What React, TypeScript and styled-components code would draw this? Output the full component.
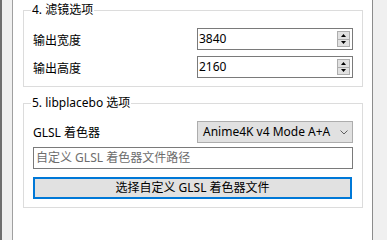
import styled, { createGlobalStyle } from 'styled-components';

const GlobalStyle = createGlobalStyle`
  html, body, #root {
    margin: 0;
    padding: 0;
    height: 100%;
    overflow: hidden;
    background: #f0f0f0;
  }
  body {
    font-family: "Noto Sans", "Noto Sans CJK SC", sans-serif;
    font-size: 12px;
    color: #000;
  }
`;

const Window = styled.div`
  display: flex;
  width: 100vw;
  height: 100vh;
  overflow: hidden;
  background: #f0f0f0;
`;

const EdgeStrip = styled.div`
  width: 2px;
  background: #6f6f6f;
  flex-shrink: 0;
`;

const Gutter = styled.div<{ $w: number }>`
  width: ${(p) => p.$w}px;
  flex-shrink: 0;
  background: #f0f0f0;
`;

const Panel = styled.div`
  width: 361px;
  box-sizing: border-box;
  flex-shrink: 0;
  background: #fff;
  border-left: 1px solid #a0a0a0;
  border-right: 1px solid #8c8c8c;
  padding: 2px 9px 0 10px;
  display: flex;
  flex-direction: column;
  gap: 8px;
`;

const Group = styled.fieldset`
  margin: 0;
  padding: 10px 9px 8px 9px;
  border: 1px solid #dcdcdc;
  min-inline-size: 0;
  display: flex;
  flex-direction: column;
`;

const Legend = styled.legend`
  padding: 0 1px;
  margin-left: -2px;
  line-height: 16px;
  font-size: 12px;
`;

const Rows = styled.div<{ $gap: number }>`
  display: flex;
  flex-direction: column;
  gap: ${(p) => p.$gap}px;
`;

const Row = styled.div`
  display: flex;
  align-items: center;
  justify-content: space-between;
  height: 22px;
`;

const Label = styled.span<{ $drop?: number }>`
  line-height: 16px;
  padding-top: ${(p) => p.$drop ?? 3}px;
`;

const SpinBox = styled.div`
  width: 156px;
  height: 22px;
  box-sizing: border-box;
  border: 1px solid #7a7a7a;
  background: #fff;
  display: flex;
  align-items: center;
  padding: 2px 2px 2px 1px;
`;

const SpinValue = styled.span`
  flex: 1;
  line-height: 16px;
`;

const SpinButtons = styled.div`
  display: flex;
  flex-direction: column;
  width: 13px;
  height: 16px;
`;

const SpinButton = styled.div`
  flex: 1;
  box-sizing: border-box;
  background: #e1e1e1;
  border: 1px solid #adadad;
  display: flex;
  align-items: center;
  justify-content: center;
  & + & {
    border-top: none;
  }
`;

const Combo = styled.div`
  width: 156px;
  height: 22px;
  box-sizing: border-box;
  background: #e1e1e1;
  border: 1px solid #adadad;
  display: flex;
  align-items: center;
  padding: 0 4px 0 5px;
`;

const ComboText = styled.span`
  flex: 1;
  line-height: 16px;
  white-space: nowrap;
`;

const TextInput = styled.div`
  height: 22px;
  box-sizing: border-box;
  border: 1px solid #7a7a7a;
  background: #fff;
  display: flex;
  align-items: center;
  padding-left: 2px;
  color: #6d6d6d;
  line-height: 16px;
`;

const Button = styled.div`
  height: 22px;
  margin-top: 4px;
  margin-right: 1px;
  box-sizing: border-box;
  border: 2px solid #0078d7;
  background: #e1e1e1;
  display: flex;
  align-items: center;
  justify-content: center;
  line-height: 16px;
`;

const Triangle = ({ down }: { down?: boolean }) => (
  <svg width="5" height="3" viewBox="0 0 5 3">
    <path d={down ? 'M0 0H5L2.5 3Z' : 'M2.5 0L5 3H0Z'} fill="#000" />
  </svg>
);

const Chevron = () => (
  <svg width="8" height="5" viewBox="0 0 8 5">
    <path d="M0.5 0.5L4 4L7.5 0.5" fill="none" stroke="#606060" strokeWidth="1" />
  </svg>
);

const Spin = ({ value }: { value: string }) => (
  <SpinBox>
    <SpinValue>{value}</SpinValue>
    <SpinButtons>
      <SpinButton>
        <Triangle />
      </SpinButton>
      <SpinButton>
        <Triangle down />
      </SpinButton>
    </SpinButtons>
  </SpinBox>
);

export default function App() {
  return (
    <>
      <GlobalStyle />
      <Window>
        <EdgeStrip />
        <Gutter $w={10} />
        <Panel>
          <Group>
            <Legend>4. 滤镜选项</Legend>
            <Rows $gap={6}>
              <Row>
                <Label>输出宽度</Label>
                <Spin value="3840" />
              </Row>
              <Row>
                <Label>输出高度</Label>
                <Spin value="2160" />
              </Row>
            </Rows>
          </Group>
          <Group>
            <Legend>5. libplacebo 选项</Legend>
            <Rows $gap={4}>
              <Row>
                <Label $drop={1}>GLSL 着色器</Label>
                <Combo>
                  <ComboText>Anime4K v4 Mode A+A</ComboText>
                  <Chevron />
                </Combo>
              </Row>
              <TextInput>自定义 GLSL 着色器文件路径</TextInput>
              <Button>选择自定义 GLSL 着色器文件</Button>
            </Rows>
          </Group>
        </Panel>
        <Gutter $w={14} />
      </Window>
    </>
  );
}
